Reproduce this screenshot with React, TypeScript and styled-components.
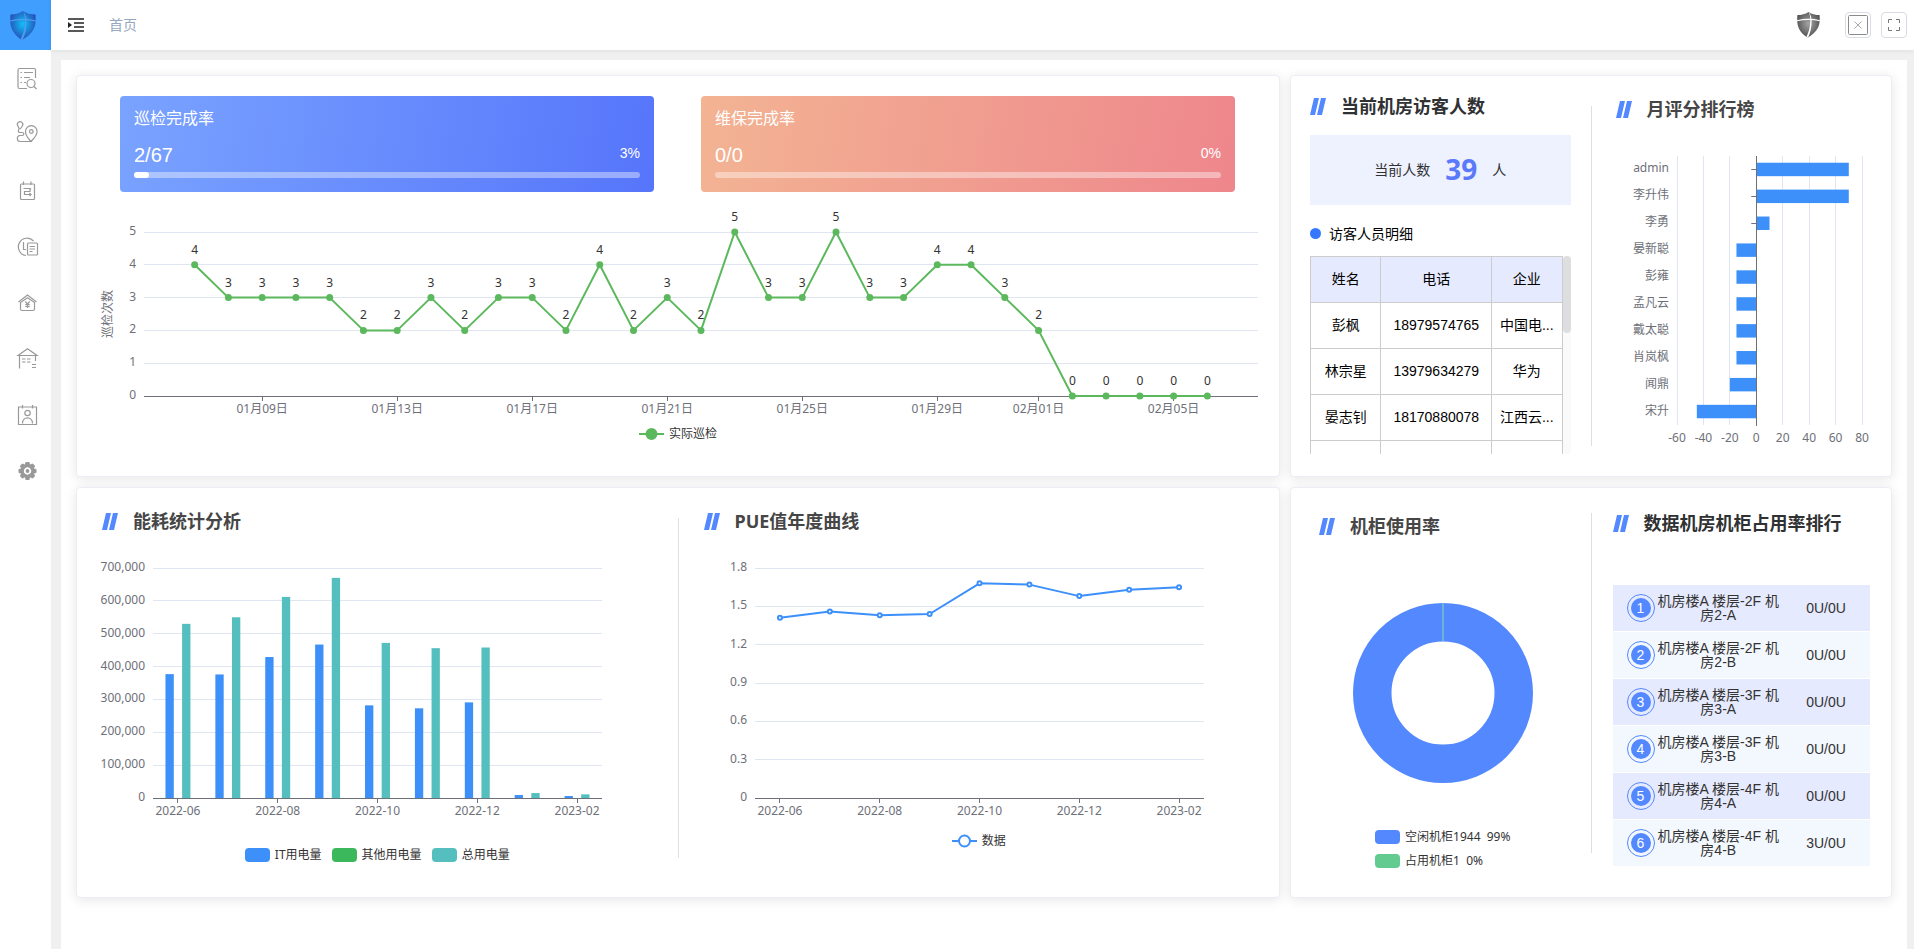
import React, { useLayoutEffect, useRef, useState } from "react";
import styled, { createGlobalStyle } from "styled-components";

const UI_FONT = `"Liberation Sans", "Noto Sans CJK SC", sans-serif`;
const CHART_FONT = `"Noto Sans", "Noto Sans CJK SC", sans-serif`;

const GlobalStyle = createGlobalStyle`
  *, *::before, *::after { box-sizing: border-box; }
  body { margin: 0; background: #f0f0f0; font-family: ${UI_FONT}; font-size: 14px; color: #303133; }
  button { font: inherit; padding: 0; background: none; border: 0; cursor: pointer; }
`;

/* ---------- shell ---------- */

const Shell = styled.div`
  display: flex;
  min-height: 100vh;
`;

const Sidebar = styled.aside`
  flex: 0 0 51px;
  background: #fff;
`;

const Brand = styled.a`
  display: flex;
  align-items: center;
  padding-left: 10px;
  height: 50px;
  background: #409eff;
`;

const Menu = styled.nav`
  display: flex;
  flex-direction: column;
  padding-top: 1px;
`;

const MenuLink = styled.a`
  display: flex;
  align-items: center;
  height: 56px;
  padding-left: 15px;
  color: #999;

  svg { overflow: visible; }
`;

const Main = styled.div`
  flex: 1;
  min-width: 0;
  display: flex;
  flex-direction: column;
`;

const Topbar = styled.header`
  display: flex;
  align-items: center;
  height: 50px;
  padding: 0 7px 0 17px;
  background: #fff;
  box-shadow: 0 1px 4px rgba(0, 21, 41, 0.08);
`;

const IconButton = styled.button`
  display: flex;
  color: #222;
`;

const Crumb = styled.a`
  margin-left: 25px;
  color: #97a8be;
  line-height: 20px;
  text-decoration: none;
`;

const Actions = styled.div`
  display: flex;
  align-items: center;
  gap: 10px;
  margin-left: auto;
`;

const Avatar = styled.button`
  display: flex;
  margin-right: 15px;
`;

const SquareButton = styled.button`
  display: flex;
  align-items: center;
  justify-content: center;
  width: 26px;
  height: 26px;
  border: 1px solid #d8dce5;
  border-radius: 4px;
`;

const Content = styled.main`
  flex: 1;
  margin: 10px 7px 0 10px;
  padding: 15px;
  background: #fff;
  display: grid;
  grid-template-columns: minmax(0, 2fr) minmax(0, 1fr);
  gap: 10px;
  align-content: start;
`;

const Card = styled.section`
  border: 1px solid #ebeef5;
  border-radius: 4px;
  background: #fff;
  box-shadow: 0 2px 12px rgba(0, 0, 0, 0.1);
`;

const SplitCard = styled(Card)`
  display: grid;
  grid-template-columns: minmax(0, 1fr) 1px minmax(0, 1fr);
`;

const Divider = styled.div<{ $top: number }>`
  height: 340px;
  margin-top: ${(p) => p.$top}px;
  background: #dcdfe6;
`;

const Panel = styled.div<{ $padding: string }>`
  padding: ${(p) => p.$padding};
`;

const Heading = styled.h2<{ $tone?: "soft"; $indent?: number }>`
  display: flex;
  align-items: center;
  gap: 15px;
  height: 20px;
  margin: 0;
  padding-left: ${(p) => p.$indent ?? 0}px;
  font: bold 18px/20px ${CHART_FONT};
  color: ${(p) => (p.$tone === "soft" ? "#464646" : "#303133")};
  white-space: nowrap;
`;

function Title(props: { children: string; soft?: boolean; indent?: number }) {
  return (
    <Heading $tone={props.soft ? "soft" : undefined} $indent={props.indent}>
      <svg width="16" height="17" viewBox="0 0 16 17" fill="#5488ff" aria-hidden="true">
        <path d="M4 0H9L5 17H0ZM11 0H16L12 17H7Z" />
      </svg>
      {props.children}
    </Heading>
  );
}

/* ---------- rate tiles ---------- */

const Rates = styled.div`
  display: grid;
  grid-template-columns: 1fr 1fr;
  gap: 47px;
  padding: 20px 44px 0 43px;
`;

const Rate = styled.div<{ $from: string; $to: string }>`
  height: 96px;
  padding: 15px 14px;
  border-radius: 4px;
  background: linear-gradient(100deg, ${(p) => p.$from}, ${(p) => p.$to});
  color: #fff;
`;

const RateName = styled.div`
  font-size: 16px;
  line-height: 16px;
`;

const RateRow = styled.div`
  display: flex;
  justify-content: space-between;
  margin-top: 18px;
`;

const RateValue = styled.span`
  font-size: 20px;
  line-height: 20px;
`;

const RatePercent = styled.span`
  line-height: 16px;
`;

const Track = styled.div`
  height: 6px;
  margin-top: 7px;
  border-radius: 3px;
  background: rgba(255, 255, 255, 0.4);
`;

const TrackFill = styled.div`
  height: 6px;
  border-radius: 3px;
  background: #fff;
`;

function RateTile(props: { name: string; value: string; percent: number; from: string; to: string }) {
  return (
    <Rate $from={props.from} $to={props.to}>
      <RateName>{props.name}</RateName>
      <RateRow>
        <RateValue>{props.value}</RateValue>
        <RatePercent>{props.percent}%</RatePercent>
      </RateRow>
      <Track>
        <TrackFill style={{ width: `${props.percent}%` }} />
      </Track>
    </Rate>
  );
}

/* ---------- charts ---------- */

const ChartBox = styled.div<{ $height: number }>`
  height: ${(p) => p.$height}px;

  svg { display: block; }
  text { font: 12px ${CHART_FONT}; fill: #6e7079; }
  text.value { fill: #333; }
`;

const Legend = styled.div<{ $top: number; $bottom?: number; $column?: boolean }>`
  display: flex;
  flex-direction: ${(p) => (p.$column ? "column" : "row")};
  justify-content: center;
  gap: 10px;
  width: fit-content;
  margin: ${(p) => p.$top}px auto ${(p) => p.$bottom ?? 0}px;
`;

const LegendItem = styled.button`
  display: flex;
  align-items: center;
  gap: 5px;
  height: 14px;
  font: 12px/14px ${CHART_FONT};
  color: #333;
  white-space: pre;
`;

const Swatch = styled.span<{ $color: string }>`
  width: 25px;
  height: 14px;
  border-radius: 4px;
  background: ${(p) => p.$color};
`;

function LineSwatch({ color, hollow }: { color: string; hollow?: boolean }) {
  return (
    <svg width="25" height="14" viewBox="0 0 25 14" stroke={color} strokeWidth="2" aria-hidden="true">
      <path d="M0 7H25" />
      <circle cx="12.5" cy="7" r={hollow ? 5.5 : 5} fill={hollow ? "#fff" : color} />
    </svg>
  );
}

function Chart(props: { height: number; label: string; draw: (width: number) => React.ReactNode }) {
  const box = useRef<HTMLDivElement>(null);
  const [width, setWidth] = useState(0);
  useLayoutEffect(() => {
    const el = box.current;
    if (!el) return;
    const measure = () => setWidth(el.clientWidth);
    measure();
    const observer = new ResizeObserver(measure);
    observer.observe(el);
    return () => observer.disconnect();
  }, []);
  return (
    <ChartBox ref={box} $height={props.height}>
      {width > 0 && (
        <svg width={width} height={props.height} role="img" aria-label={props.label}>
          {props.draw(width)}
        </svg>
      )}
    </ChartBox>
  );
}

const snap = (n: number) => Math.floor(n) + 0.5;

type AxesProps = {
  left: number;
  right: number;
  top: number;
  bottom: number;
  rows: string[];
  ticks: { x: number; text: string }[];
};

/* Horizontal grid with value labels on the left and category ticks below. */
function Axes({ left, right, top, bottom, rows, ticks }: AxesProps) {
  const step = (bottom - top) / (rows.length - 1);
  return (
    <g>
      {rows.map((text, i) => {
        const y = bottom - step * i;
        return (
          <g key={text}>
            <line x1={left} x2={right} y1={snap(y)} y2={snap(y)} stroke={i === 0 ? "#6e7079" : "#e0e6f1"} />
            <text x={left - 8} y={y + 3} textAnchor="end">{text}</text>
          </g>
        );
      })}
      {ticks.map((t) => (
        <g key={t.text}>
          <line x1={snap(t.x)} x2={snap(t.x)} y1={bottom} y2={bottom + 5} stroke="#6e7079" />
          <text x={t.x} y={bottom + 17} textAnchor="middle">{t.text}</text>
        </g>
      ))}
    </g>
  );
}

const inspections = [
  4, 3, 3, 3, 3, 2, 2, 3, 2, 3, 3, 2, 4, 2, 3, 2, 5, 3, 3, 5, 3, 3, 4, 4, 3, 2, 0, 0, 0, 0, 0,
];
const inspectionTicks: [number, string][] = [
  [2, "01月09日"], [6, "01月13日"], [10, "01月17日"], [14, "01月21日"],
  [18, "01月25日"], [22, "01月29日"], [25, "02月01日"], [29, "02月05日"],
];

function drawInspections(width: number) {
  const left = 67, right = width - 21, top = 40, bottom = 204;
  const slot = (right - left) / 33;
  const px = (i: number) => left + slot * (i + 1.5);
  const py = (v: number) => bottom - ((bottom - top) / 5) * v;
  return (
    <>
      <Axes
        left={left} right={right} top={top} bottom={bottom}
        rows={["0", "1", "2", "3", "4", "5"]}
        ticks={inspectionTicks.map(([i, text]) => ({ x: px(i), text }))}
      />
      <text transform={`translate(35 ${(top + bottom) / 2}) rotate(-90)`} textAnchor="middle">巡检次数</text>
      <polyline
        points={inspections.map((v, i) => `${px(i)},${py(v)}`).join(" ")}
        fill="none" stroke="#5cb85c" strokeWidth="2" strokeLinejoin="bevel"
      />
      {inspections.map((v, i) => (
        <g key={i}>
          <circle cx={px(i)} cy={py(v)} r="3.5" fill="#5cb85c" />
          <text className="value" x={px(i)} y={py(v) - 11} textAnchor="middle">{v}</text>
        </g>
      ))}
    </>
  );
}

const months = ["2022-06", "2022-07", "2022-08", "2022-09", "2022-10", "2022-11", "2022-12", "2023-01", "2023-02"];
const itPower = [377000, 376000, 429000, 467000, 282000, 273000, 291000, 9000, 6000];
const totalPower = [530000, 550000, 612000, 670000, 472000, 456000, 458000, 15000, 11000];
const pue = [1.41, 1.46, 1.43, 1.44, 1.68, 1.67, 1.58, 1.63, 1.65];

const monthTicks = (px: (i: number) => number) =>
  months.map((text, i) => ({ x: px(i), text })).filter((_, i) => i % 2 === 0);

function drawPower(width: number) {
  const left = 76, right = width - 76, top = 37, bottom = 267;
  const slot = (right - left) / months.length;
  const bar = slot / 6;
  const px = (i: number) => left + slot * (i + 0.5);
  const size = (v: number) => ((bottom - top) * v) / 700000;
  return (
    <>
      <Axes
        left={left} right={right} top={top} bottom={bottom}
        rows={["0", "100,000", "200,000", "300,000", "400,000", "500,000", "600,000", "700,000"]}
        ticks={monthTicks(px)}
      />
      {months.map((m, i) => (
        <g key={m}>
          <rect x={px(i) - bar * 1.5} y={bottom - size(itPower[i])} width={bar} height={size(itPower[i])} fill="#3d90f9" />
          <rect x={px(i) + bar * 0.5} y={bottom - size(totalPower[i])} width={bar} height={size(totalPower[i])} fill="#55bfbf" />
        </g>
      ))}
    </>
  );
}

function drawPue(width: number) {
  const left = 76, right = width - 76, top = 37, bottom = 267;
  const slot = (right - left) / months.length;
  const px = (i: number) => left + slot * (i + 0.5);
  const py = (v: number) => bottom - ((bottom - top) * v) / 1.8;
  return (
    <>
      <Axes
        left={left} right={right} top={top} bottom={bottom}
        rows={["0", "0.3", "0.6", "0.9", "1.2", "1.5", "1.8"]}
        ticks={monthTicks(px)}
      />
      <polyline
        points={pue.map((v, i) => `${px(i)},${py(v)}`).join(" ")}
        fill="none" stroke="#3d90f9" strokeWidth="2" strokeLinejoin="bevel"
      />
      {pue.map((v, i) => (
        <circle key={i} cx={px(i)} cy={py(v)} r="2" fill="#fff" stroke="#3d90f9" strokeWidth="2" />
      ))}
    </>
  );
}

const scores: [string, number][] = [
  ["admin", 70], ["李升伟", 70], ["李勇", 10], ["晏新聪", -15], ["彭雍", -15],
  ["孟凡云", -15], ["戴太聪", -15], ["肖岚枫", -15], ["闻鼎", -20], ["宋升", -45],
];

function drawScores(width: number) {
  const left = 85, right = width - 30, top = 37, bottom = 306;
  const row = (bottom - top) / scores.length;
  const px = (v: number) => left + ((right - left) * (v + 60)) / 140;
  return (
    <>
      {[-60, -40, -20, 0, 20, 40, 60, 80].map((v) => (
        <g key={v}>
          {v !== 0 && <line x1={snap(px(v))} x2={snap(px(v))} y1={top} y2={bottom} stroke="#e0e6f1" />}
          <text x={px(v)} y={bottom + 17} textAnchor="middle">{v}</text>
        </g>
      ))}
      {scores.map(([name, v], i) => {
        const mid = top + row * (i + 0.5);
        return (
          <g key={name}>
            {v > 0 && <line x1={px(0) - 5} x2={px(0)} y1={snap(mid)} y2={snap(mid)} stroke="#6e7079" />}
            <rect x={Math.min(px(0), px(v))} y={mid - row / 4} width={Math.abs(px(v) - px(0))} height={row / 2} fill="#3d90f9" />
            <text x={left - 8} y={mid + 3} textAnchor="end">{name}</text>
          </g>
        );
      })}
      <line x1={snap(px(0))} x2={snap(px(0))} y1={top} y2={bottom + 1} stroke="#6e7079" />
    </>
  );
}

/* ---------- visitors ---------- */

const Stat = styled.div`
  display: flex;
  align-items: center;
  justify-content: center;
  gap: 15px;
  height: 70px;
  margin-top: 19px;
  padding-bottom: 2px;
  background: #eef1fe;
`;

const StatNumber = styled.strong`
  font: bold 28px/32px ${CHART_FONT};
  color: #5b79fb;
`;

const SubHeading = styled.h3`
  display: flex;
  align-items: center;
  gap: 8px;
  height: 20px;
  margin: 18px 0 13px;
  font-size: 14px;
  font-weight: normal;
  color: #000;

  &::before {
    content: "";
    width: 11px;
    height: 11px;
    border-radius: 50%;
    background: #3677ff;
  }
`;

const ScrollArea = styled.div`
  display: grid;
  grid-template-columns: minmax(0, 1fr) 8px;
  height: 198px;
`;

const Viewport = styled.div`
  overflow: hidden;
`;

const ScrollTrack = styled.div`
  border-radius: 4px;
  background: #fafafa;
`;

const ScrollThumb = styled.div`
  height: 39%;
  border-radius: 4px;
  background: #dddee0;
`;

const VisitorTable = styled.table`
  width: 100%;
  table-layout: fixed;
  border-collapse: collapse;
  color: #000;
  text-align: center;
  line-height: 20px;

  tr { height: 46px; }
  th, td { padding: 0 0 2px; border: 1px solid #ccc; font-weight: normal; }
  th { background: #e6eafe; }
  th:first-child { width: 28%; }
  th:last-child { width: 28%; }
`;

const visitors = [
  ["彭枫", "18979574765", "中国电..."],
  ["林宗星", "13979634279", "华为"],
  ["晏志钊", "18170880078", "江西云..."],
  ["", "", ""],
];

/* ---------- cabinet ranking ---------- */

const RankTable = styled.table`
  width: 100%;
  margin-top: 52px;
  table-layout: fixed;
  border-collapse: separate;
  border-spacing: 0;
  color: #333;
  text-align: center;
  line-height: 14px;

  td { height: 47px; padding: 0; border-bottom: 1px solid #fff; }
  td:first-child { width: 42px; }
  td:last-child { width: 88px; }
  tr:nth-child(odd) { background: #e6eafe; }
  tr:nth-child(even) { background: #f3f8ff; }
`;

const Badge = styled.span`
  display: block;
  width: 28px;
  height: 28px;
  margin-left: auto;
  padding: 3px;
  border: 1px solid #5488ff;
  border-radius: 50%;
`;

const BadgeCore = styled.span`
  display: block;
  border-radius: 50%;
  background: #5488ff;
  color: #fff;
  line-height: 20px;
`;

const ranking = [
  ["机房楼A 楼层-2F 机房2-A", "0U/0U"],
  ["机房楼A 楼层-2F 机房2-B", "0U/0U"],
  ["机房楼A 楼层-3F 机房3-A", "0U/0U"],
  ["机房楼A 楼层-3F 机房3-B", "0U/0U"],
  ["机房楼A 楼层-4F 机房4-A", "0U/0U"],
  ["机房楼A 楼层-4F 机房4-B", "3U/0U"],
];

const Donut = styled.svg`
  display: block;
  margin: 67px auto 0;
`;

/* ---------- icons ---------- */

function Shield({ id, inner, outer, streak, width }: { id: string; inner: string; outer: string; streak: string; width: number }) {
  return (
    <svg width={width} height={(width * 29) / 26} viewBox="0 0 26 29" aria-hidden="true">
      <defs>
        <radialGradient id={id} cx="0.5" cy="0.45" r="0.6">
          <stop offset="0" stopColor={inner} />
          <stop offset="1" stopColor={outer} />
        </radialGradient>
      </defs>
      <path d="M13 0C9.500 2.500 5 3.500 0.500 3.500C-0.300 13 0 21.500 12 29C25.500 21.500 26.300 13 25.500 3.500C21 3.500 16.500 2.500 13 0Z" fill={`url(#${id})`} />
      <path d="M0 10C8 8 18 8 26 10" fill="none" stroke={streak} strokeWidth="1.200" />
      <path d="M13 0C14.500 3 15.200 6 15 10C14.800 17 13.500 23 10.500 28.500L12.500 29C15.500 23 16.500 17 16.500 10C16.500 6 15.500 3 13 0Z" fill={streak} />
    </svg>
  );
}

const glyphs: Record<string, React.ReactNode> = {
  巡检记录: (
    <>
      <path d="M12 21.500H4.500Q3 21.500 3 20V3Q3 1.500 4.500 1.500H19Q20.500 1.500 20.500 3V11" />
      <path d="M5.500 5.500H7M9 5.500H18M5.500 10.500H7M9 10.500H15M5.500 15.500H7M9 15.500H11" />
      <circle cx="16" cy="16.500" r="4" />
      <path d="M19 19.500L21.500 22" />
    </>
  ),
  巡检路线: (
    <path
      transform="translate(0 -3)"
      d="M4 8.500L2.900 6A2.700 2.700 0 1 1 7.300 6L5.500 8.500C2.500 9 2.500 12.500 5.500 12.500H7C9.500 12.500 9.500 15.500 7 15.500H5C1.500 15.500 1.500 21.500 5 21.500H16C12 17.500 10.500 14.500 10.500 11.500A5.800 5.800 0 0 1 22.100 11.500C22.100 14.500 20 17.500 16 21.500M18.100 11.500A1.800 1.800 0 1 1 14.500 11.500A1.800 1.800 0 1 1 18.100 11.500"
    />
  ),
  任务计划: (
    <>
      <rect x="5.500" y="5" width="14" height="15.500" rx="1" />
      <path d="M8.500 2.500V6M16 2.500V6M8.500 9.500H15V12.500H9.500V15.500H16M15 9.500L16 10.500M14.500 14L16 15.500L14.500 17" />
    </>
  ),
  历史工单: (
    <>
      <path d="M11 20.500A8.700 8.700 0 1 1 18.500 6" />
      <path d="M8.500 7V14.500H11" />
      <rect x="12.500" y="8" width="10" height="12" rx="1" />
      <path d="M14.500 11.500H20M14.500 14H20M14.500 16.500H17.500" />
    </>
  ),
  资产管理: (
    <>
      <path d="M3.500 11L12.500 4L21.500 11M5.500 11.500V18Q5.500 19.500 7 19.500H18Q19.500 19.500 19.500 18V11.500L12.500 6.800Z" />
      <path d="M10.300 10.500L12.500 13L14.700 10.500M12.500 13V17M10.300 13.500H14.700M10.300 15.300H14.700" />
    </>
  ),
  机房管理: (
    <>
      <path d="M3 8.500L12.500 1.800L22 8.500ZM4.500 8.500V21.500M20.500 8.500V14" />
      <path d="M7 12H10.500M12 12H15.500M7 15H10.500M12 15H15.500M17 17.500H21M17 20.500H21" />
    </>
  ),
  访客管理: (
    <>
      <path d="M3.500 4H21.500V21.500H3.500ZM7.500 2V5.500M17.500 2V5.500" />
      <circle cx="12.500" cy="10" r="2.700" />
      <path d="M7.500 20.500C7.500 13 17.500 13 17.500 20.500" />
    </>
  ),
  系统设置: (
    <g transform="translate(12.500 12)" stroke="none" fill="currentColor">
      {[0, 45, 90, 135].map((a) => (
        <rect key={a} x="-2.300" y="-9" width="4.600" height="18" rx="1.300" transform={`rotate(${a})`} />
      ))}
      <circle r="7.200" />
      <circle r="2.800" fill="none" stroke="#fff" strokeWidth="1.800" />
    </g>
  ),
};

export default function App() {
  return (
    <>
      <GlobalStyle />
      <Shell>
        <Sidebar>
          <Brand href="#" aria-label="首页">
            <Shield id="brand" inner="#10c0f8" outer="#2a45b0" streak="#4f9df0" width={26} />
          </Brand>
          <Menu>
            {Object.entries(glyphs).map(([name, glyph]) => (
              <MenuLink key={name} href="#" aria-label={name}>
                <svg width="24" height="24" viewBox="0 0 24 24" fill="none" stroke="currentColor" strokeWidth="1.200">
                  {glyph}
                </svg>
              </MenuLink>
            ))}
          </Menu>
        </Sidebar>
        <Main>
          <Topbar>
            <IconButton aria-label="展开菜单">
              <svg width="16" height="14" viewBox="0 0 16 14" fill="none" stroke="currentColor" strokeWidth="1.600">
                <path d="M0 1H16M6 5H16M6 9H16M0 13H16" />
                <path d="M0 4L4 7L0 10Z" fill="currentColor" stroke="none" />
              </svg>
            </IconButton>
            <Crumb href="#">首页</Crumb>
            <Actions>
              <Avatar aria-label="用户">
                <Shield id="user" inner="#a5a5a5" outer="#4a4a4a" streak="#fff" width={23} />
              </Avatar>
              <SquareButton aria-label="关闭">
                <svg width="20" height="20" viewBox="0 0 20 20" fill="none">
                  <rect x="0.500" y="0.500" width="19" height="19" rx="1" stroke="#8a8a8a" />
                  <path d="M6.500 6.500L13.500 13.500M13.500 6.500L6.500 13.500" stroke="#aaa" />
                </svg>
              </SquareButton>
              <SquareButton aria-label="全屏">
                <svg width="12" height="12" viewBox="0 0 12 12" fill="none" stroke="#777">
                  <path d="M0.500 4V0.500H4M8 0.500H11.500V4M11.500 8V11.500H8M4 11.500H0.500V8" />
                </svg>
              </SquareButton>
            </Actions>
          </Topbar>
          <Content>
            <Card>
              <Rates>
                <RateTile name="巡检完成率" value="2/67" percent={3} from="#7aa3ff" to="#5675fb" />
                <RateTile name="维保完成率" value="0/0" percent={0} from="#f3b493" to="#ee868c" />
              </Rates>
              <Chart height={228} label="巡检次数" draw={drawInspections} />
              <Legend $top={7} $bottom={34}>
                <LegendItem><LineSwatch color="#5cb85c" />实际巡检</LegendItem>
              </Legend>
            </Card>

            <SplitCard>
              <Panel $padding="20px 20px 22px 19px">
                <Title>当前机房访客人数</Title>
                <Stat>
                  <span>当前人数</span>
                  <StatNumber>39</StatNumber>
                  <span>人</span>
                </Stat>
                <SubHeading>访客人员明细</SubHeading>
                <ScrollArea>
                  <Viewport>
                    <VisitorTable>
                      <thead>
                        <tr><th>姓名</th><th>电话</th><th>企业</th></tr>
                      </thead>
                      <tbody>
                        {visitors.map((row, i) => (
                          <tr key={i}>{row.map((cell, j) => <td key={j}>{cell}</td>)}</tr>
                        ))}
                      </tbody>
                    </VisitorTable>
                  </Viewport>
                  <ScrollTrack><ScrollThumb /></ScrollTrack>
                </ScrollArea>
              </Panel>
              <Divider $top={30} />
              <Panel $padding="23px 0 0">
                <Title soft indent={24}>月评分排行榜</Title>
                <Chart height={330} label="月评分排行榜" draw={drawScores} />
              </Panel>
            </SplitCard>

            <SplitCard>
              <Panel $padding="23px 0 35px">
                <Title soft indent={25}>能耗统计分析</Title>
                <Chart height={290} label="能耗统计分析" draw={drawPower} />
                <Legend $top={27}>
                  <LegendItem><Swatch $color="#3d90f9" />IT用电量</LegendItem>
                  <LegendItem><Swatch $color="#3cb85c" />其他用电量</LegendItem>
                  <LegendItem><Swatch $color="#55bfbf" />总用电量</LegendItem>
                </Legend>
              </Panel>
              <Divider $top={30} />
              <Panel $padding="23px 0 35px">
                <Title soft indent={25}>PUE值年度曲线</Title>
                <Chart height={290} label="PUE值年度曲线" draw={drawPue} />
                <Legend $top={13}>
                  <LegendItem><LineSwatch color="#3d90f9" hollow />数据</LegendItem>
                </Legend>
              </Panel>
            </SplitCard>

            <SplitCard>
              <Panel $padding="28px 24px 0 28px">
                <Title soft>机柜使用率</Title>
                <Donut width="180" height="180" viewBox="0 0 180 180" role="img" aria-label="机柜使用率">
                  <circle cx="90" cy="90" r="70.750" fill="none" stroke="#5488ff" strokeWidth="38.500" />
                  <path d="M90 0V38.500" stroke="#7fe0b0" strokeWidth="1" />
                </Donut>
                <Legend $top={47} $column>
                  <LegendItem><Swatch $color="#5488ff" />{"空闲机柜1944  99%"}</LegendItem>
                  <LegendItem><Swatch $color="#63cb8f" />{"占用机柜1  0%"}</LegendItem>
                </Legend>
              </Panel>
              <Divider $top={25} />
              <Panel $padding="25px 21px 0 21px">
                <Title>数据机房机柜占用率排行</Title>
                <RankTable>
                  <tbody>
                    {ranking.map(([name, usage], i) => (
                      <tr key={name}>
                        <td><Badge><BadgeCore>{i + 1}</BadgeCore></Badge></td>
                        <td>{name}</td>
                        <td>{usage}</td>
                      </tr>
                    ))}
                  </tbody>
                </RankTable>
              </Panel>
            </SplitCard>
          </Content>
        </Main>
      </Shell>
    </>
  );
}
